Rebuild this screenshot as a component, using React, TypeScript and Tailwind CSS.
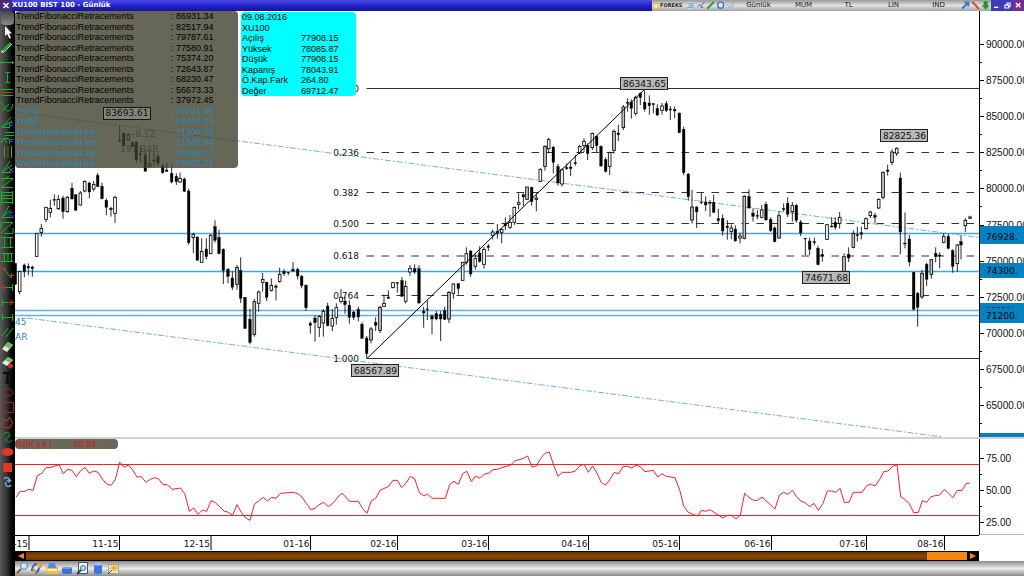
import type { ReactNode } from 'react'
import clsx from 'clsx'

// f = falling (black), h = rising (hollow), g = rising (shaded)
type Bar = [x: number, high: number, low: number, top: number, bottom: number, kind: 'f' | 'h' | 'g']

// bars are kept in thirds of a pixel, relative to the origin of each block
const blocks: { x: number; y: number; bars: Bar[] }[] = [
  {
    x: 0, y: 160,
    bars: [
      [46, 310, 373, 310, 373, 'f'], [59, 334, 403, 334, 395, 'h'], [73, 311, 352, 315, 335, 'f'], [85, 310, 346, 319, 324, 'f'],
      [97, 317, 350, 321, 326, 'f'], [110, 220, 289, 220, 289, 'h'], [124, 192, 230, 205, 218, 'h'], [138, 142, 187, 142, 178, 'h'],
      [151, 119, 172, 145, 157, 'h'], [163, 103, 137, 118, 121, 'f'], [175, 105, 150, 118, 146, 'h'], [189, 107, 176, 114, 155, 'f'],
      [202, 108, 158, 112, 155, 'h'], [216, 69, 118, 85, 117, 'f'], [227, 104, 151, 104, 151, 'f'], [241, 93, 136, 99, 135, 'h'],
      [254, 61, 97, 64, 93, 'h'], [268, 65, 115, 69, 96, 'f'], [281, 63, 94, 73, 87, 'h'], [293, 39, 81, 46, 80, 'f'],
      [306, 68, 118, 79, 116, 'f'], [319, 115, 166, 121, 142, 'f'], [333, 140, 170, 145, 149, 'f'], [345, 107, 189, 112, 160, 'h'],
      [359, -103, -55, -60, -57, 'f'], [371, -81, -43, -81, -43, 'f'], [385, -80, -58, -76, -60, 'h'], [397, -55, -38, -53, -40, 'f'],
      [409, -56, 10, -53, 0, 'f'], [421, -40, 10, -20, -17, 'f'], [436, -25, 34, -15, 34, 'f'], [449, -30, 22, 12, 20, 'h'],
      [462, -25, 20, 0, 3, 'f'], [474, -20, 18, -10, 10, 'f'], [488, 10, 41, 18, 38, 'f'], [500, 7, 36, 30, 34, 'f'],
      [515, 13, 70, 40, 66, 'f'], [529, 40, 75, 49, 65, 'f'], [540, 38, 68, 55, 66, 'h'], [553, 53, 96, 57, 94, 'f'],
      [566, 86, 254, 93, 248, 'f'], [580, 218, 279, 223, 233, 'h'], [592, 229, 302, 231, 301, 'f'], [605, 235, 308, 274, 307, 'h'],
      [619, 235, 298, 267, 290, 'f'], [632, 222, 282, 226, 281, 'h'], [645, 181, 248, 200, 241, 'f'], [657, 209, 283, 232, 281, 'f'],
      [670, 265, 372, 268, 331, 'f'], [684, 324, 370, 328, 349, 'f'], [697, 334, 390, 354, 382, 'f'], [711, 315, 389, 322, 373, 'g'],
      [722, 292, 429, 331, 415, 'f'], [735, 411, 507, 412, 505, 'f'], [750, 446, 553, 478, 547, 'f'], [763, 417, 530, 425, 523, 'g'],
      [776, 392, 455, 396, 430, 'h'], [788, 339, 395, 358, 367, 'h'], [800, 365, 423, 367, 412, 'f'], [814, 355, 395, 376, 391, 'h'],
      [828, 373, 421, 378, 382, 'f'], [839, 323, 368, 343, 364, 'h'], [852, 327, 348, 334, 341, 'f'], [865, 336, 345, 337, 339, 'f'],
      [879, 306, 335, 328, 333, 'f'], [893, 323, 358, 328, 348, 'f'], [905, 345, 385, 349, 377, 'f'], [918, 373, 453, 376, 443, 'f'],
      [931, 484, 521, 490, 496, 'f'], [945, 466, 545, 474, 488, 'f'], [958, 465, 531, 469, 502, 'h'], [970, 447, 530, 454, 489, 'h'],
      [983, 428, 499, 438, 497, 'f'], [997, 447, 513, 475, 498, 'h'], [1009, 430, 494, 443, 472, 'h'],
    ],
  },
  {
    x: 300, y: 200,
    bars: [
      [123, 267, 310, 292, 304, 'h'], [135, 290, 341, 303, 314, 'f'], [148, 301, 371, 316, 352, 'f'], [161, 333, 360, 336, 352, 'f'],
      [175, 320, 364, 328, 351, 'f'], [186, 367, 416, 373, 415, 'f'], [200, 408, 474, 414, 461, 'f'], [213, 381, 430, 387, 420, 'g'],
      [227, 352, 393, 367, 376, 'f'], [240, 318, 399, 322, 391, 'g'], [252, 284, 321, 310, 319, 'h'], [265, 271, 297, 291, 295, 'f'],
      [279, 246, 265, 248, 263, 'h'], [292, 246, 278, 248, 250, 'f'], [306, 231, 290, 242, 289, 'f'], [317, 242, 310, 259, 304, 'h'],
      [330, 195, 227, 205, 216, 'h'], [344, 193, 222, 206, 216, 'f'], [357, 196, 311, 206, 309, 'f'], [371, 320, 383, 334, 339, 'f'],
      [382, 301, 360, 327, 329, 'f'], [396, 343, 403, 348, 357, 'f'], [409, 333, 361, 341, 357, 'f'], [422, 333, 423, 343, 357, 'f'],
      [434, 320, 360, 332, 358, 'f'], [447, 273, 369, 277, 357, 'g'], [460, 250, 297, 252, 280, 'h'], [475, 250, 284, 251, 266, 'f'],
      [488, 187, 241, 187, 241, 'h'], [499, 142, 194, 161, 187, 'h'], [512, 150, 230, 153, 222, 'f'], [526, 162, 209, 176, 199, 'h'],
      [539, 139, 188, 159, 184, 'f'], [552, 141, 206, 148, 193, 'h'], [565, 132, 153, 138, 142, 'f'],
    ],
  },
  {
    x: 380, y: 70,
    bars: [
      [338, 479, 508, 486, 496, 'h'], [352, 462, 506, 484, 490, 'f'], [365, 475, 520, 478, 487, 'h'], [376, 442, 480, 462, 468, 'f'],
      [390, 435, 477, 457, 472, 'h'], [403, 410, 465, 412, 457, 'h'], [416, 370, 418, 398, 403, 'h'], [430, 370, 408, 374, 381, 'f'],
      [441, 351, 388, 351, 388, 'g'], [455, 350, 407, 352, 395, 'f'], [469, 370, 424, 384, 388, 'h'], [481, 295, 336, 298, 334, 'h'],
      [495, 226, 302, 229, 289, 'g'], [506, 203, 250, 209, 236, 'h'], [520, 229, 310, 231, 277, 'f'], [534, 282, 347, 290, 339, 'f'],
      [546, 295, 350, 299, 342, 'h'], [560, 280, 300, 293, 296, 'f'], [572, 275, 318, 291, 296, 'f'], [586, 255, 287, 278, 281, 'f'],
      [599, 224, 252, 229, 249, 'h'], [612, 205, 246, 214, 227, 'h'], [623, 220, 270, 226, 251, 'f'], [637, 188, 240, 190, 233, 'h'],
      [650, 196, 246, 199, 227, 'f'], [663, 226, 290, 229, 288, 'f'], [677, 262, 308, 269, 304, 'f'], [689, 245, 315, 248, 289, 'h'],
      [702, 178, 251, 184, 241, 'g'], [715, 164, 213, 189, 194, 'f'], [730, 105, 180, 111, 173, 'g'], [743, 85, 125, 97, 100, 'f'],
      [754, 88, 146, 96, 115, 'f'], [767, 77, 137, 82, 130, 'h'], [781, 67, 105, 70, 83, 'f'], [794, 61, 125, 97, 117, 'f'],
      [808, 76, 134, 99, 107, 'f'], [820, 99, 130, 101, 104, 'f'], [832, 103, 138, 115, 135, 'f'], [846, 99, 134, 108, 121, 'h'],
      [859, 93, 126, 101, 122, 'f'], [871, 108, 150, 117, 120, 'f'], [884, 110, 145, 118, 123, 'f'], [898, 128, 189, 129, 188, 'f'],
      [911, 170, 315, 178, 308, 'f'], [925, 309, 392, 312, 380, 'f'], [936, 360, 461, 411, 450, 'g'], [950, 408, 474, 411, 426, 'f'],
      [964, 367, 402, 396, 398, 'f'], [977, 379, 423, 396, 405, 'f'],
    ],
  },
  {
    x: 670, y: 130,
    bars: [
      [120, 210, 260, 217, 220, 'f'], [131, 194, 249, 217, 247, 'f'], [145, 236, 282, 266, 272, 'f'], [158, 253, 317, 265, 303, 'f'],
      [172, 270, 329, 288, 293, 'f'], [184, 283, 328, 294, 304, 'h'], [196, 286, 335, 297, 333, 'f'], [210, 308, 340, 318, 324, 'h'],
      [223, 196, 328, 199, 325, 'g'], [237, 178, 236, 200, 234, 'f'], [249, 235, 275, 249, 259, 'f'], [262, 240, 268, 256, 259, 'f'],
      [275, 225, 265, 240, 262, 'h'], [288, 215, 272, 223, 270, 'f'], [302, 262, 306, 268, 302, 'f'], [314, 289, 337, 294, 335, 'f'],
      [327, 244, 326, 257, 324, 'g'], [341, 220, 245, 236, 239, 'f'], [353, 202, 261, 220, 253, 'f'], [367, 216, 275, 227, 245, 'h'],
      [379, 222, 278, 226, 271, 'f'], [392, 270, 318, 276, 309, 'f'], [406, 325, 375, 325, 327, 'f'], [419, 323, 376, 333, 358, 'f'],
      [433, 323, 346, 335, 338, 'f'], [444, 347, 406, 355, 404, 'f'], [457, 357, 395, 373, 378, 'f'], [471, 282, 330, 284, 328, 'h'],
      [485, 262, 292, 288, 291, 'f'], [496, 262, 299, 277, 292, 'f'], [509, 246, 296, 262, 280, 'h'], [522, 370, 440, 380, 425, 'g'],
      [536, 352, 396, 373, 384, 'f'], [550, 301, 355, 310, 352, 'g'], [562, 290, 335, 314, 317, 'f'], [574, 290, 328, 308, 313, 'f'],
      [588, 262, 299, 266, 296, 'h'], [601, 243, 264, 246, 257, 'h'], [615, 249, 279, 256, 262, 'f'], [626, 205, 237, 208, 234, 'h'],
      [639, 124, 208, 127, 202, 'g'], [653, 104, 137, 120, 124, 'f'], [666, 58, 106, 66, 97, 'g'], [680, 52, 78, 55, 70, 'h'],
      [691, 128, 373, 144, 306, 'f'], [705, 247, 355, 339, 342, 'f'], [718, 315, 409, 327, 396, 'f'], [731, 426, 541, 427, 538, 'f'],
      [743, 486, 590, 490, 532, 'f'], [756, 420, 506, 430, 501, 'g'], [770, 399, 468, 403, 448, 'f'], [784, 387, 446, 389, 433, 'g'],
      [797, 352, 397, 370, 380, 'f'], [809, 367, 414, 375, 378, 'f'], [821, 309, 340, 319, 337, 'h'], [835, 312, 358, 319, 355, 'f'],
      [848, 358, 428, 362, 409, 'f'], [862, 342, 425, 345, 401, 'h'], [873, 317, 388, 335, 345, 'f'], [886, 264, 306, 271, 287, 'h'],
      [900, 257, 266, 261, 265, 'h'],
    ],
  },
]

const rsi = [
  { x: 0, y: 430, points: '48,202 60,184 75,184 85,178 99,181 112,137 125,130 138,113 153,112 177,104 190,131 203,118 216,121 229,140 242,122 255,112 268,130 281,123 294,127 307,147 320,162 333,166 346,149 359,96 373,112 385,105 398,120 411,141 424,140 438,157 451,148 464,143 476,147 489,164 502,164 516,178 542,174 555,193 568,244 581,234 594,253 607,240 620,244 633,212 646,218 672,243 685,247 698,255 711,224 724,247 737,264 750,271 763,223 789,202 802,213 815,202 828,205 841,190 880,187 893,191 906,201 919,220 932,239 945,235 958,224 971,217 985,230 1000,218 1020,194' },
  { x: 340, y: 440, points: '0,164 5,160 14,167 28,184 55,184 68,206 81,220 94,182 107,175 120,151 146,139 159,121 172,121 185,143 198,130 211,109 224,116 238,158 250,167 263,163 277,175 316,175 329,134 342,124 355,133 368,101 381,94 394,125 407,108 420,115 433,102 446,100 459,89 472,88 485,83 511,76 524,63 550,55 563,48 576,81 589,78 602,55 615,40 628,36 641,76 654,109 667,97 693,97 706,93 719,78 732,73 745,97 758,78 771,99 784,128 797,135 810,118 823,97 836,101 849,80 862,79 875,84 888,76 901,80 914,95 940,91 953,111 966,101 979,109 1005,113 1020,153' },
  { x: 640, y: 440, points: '120,153 131,198 144,216 158,223 173,228 184,211 197,214 210,209 236,226 249,234 262,226 275,226 288,237 301,226 314,160 327,172 340,181 353,181 366,171 405,207 418,165 431,157 444,163 457,151 470,171 483,183 496,189 509,200 522,190 535,211 549,190 562,153 575,153 588,157 600,145 613,187 627,187 640,157 666,157 679,138 692,132 705,138 720,117' },
  { x: 840, y: 280, points: '120,597 131,575 144,573 157,560 171,554 182,650 195,659 208,671 221,698 235,697 247,662 260,667 273,650 286,647 299,645 313,628 326,640 339,653 352,631 366,632 378,611 390,609' },
]

const fibLevels = [
  ['0.000', 88.5],
  ['0.236', 152.5],
  ['0.382', 192.5],
  ['0.500', 223.5],
  ['0.618', 256],
  ['0.764', 295.5],
  ['1.000', 358.5],
] as const

const priceLabels = ['90000.00', '87500.00', '85000.00', '82500.00', '80000.00', '77500.00', '75000.00', '72500.00', '70000.00', '67500.00', '65000.00']

const tags = [
  ['86343.65', 620.5, 77.5],
  ['68567.89', 351.5, 364.5],
  ['74671.68', 802.5, 271.5],
  ['82825.36', 880.5, 129.5],
] as const

const months = [
  ['10-15', 29],
  ['11-15', 119.5],
  ['12-15', 211],
  ['01-16', 310.5],
  ['02-16', 397.5],
  ['03-16', 488.5],
  ['04-16', 588.5],
  ['05-16', 679.5],
  ['06-16', 771.5],
  ['07-16', 866.5],
  ['08-16', 944.5],
] as const

const retracements = ['86931.34', '82517.94', '79787.61', '77580.91', '75374.20', '72643.87', '68230.47', '56673.33', '37972.45']

const trends = [
  ['Trend', '77741.39'],
  ['Trend', '62344.23'],
  ['TrendHorizontalLine', '71200.00'],
  ['TrendHorizontalLine', '71546.94'],
  ['TrendHorizontalLine', '76928.27'],
  ['TrendHorizontalLine', '74300.31'],
]

const quote = [
  ['Açılış', '77908.15'],
  ['Yüksek', '78085.87'],
  ['Düşük', '77908.15'],
  ['Kapanış', '78043.91'],
  ['Ö.Kap.Fark', '264.80'],
  ['Değer', '69712.47'],
]

const G = '#12b81e'
const R = '#d42a2a'
const B = '#2a62c8'

// drawing tools, top to bottom
const tools: [string, ReactNode][] = [
  ['Select', <path d="M5 1v10l2.300-2 2 4.500 1.700-.8-2-4.300h3z" fill="#fff" />],
  ['Pencil', <g><path d="M2 12 11 3" stroke="#25a52a" strokeWidth="3" /><path d="M3.500 12.500 12 4" stroke="#9be09b" /><path d="m1 13 1-3 2 2z" fill="#f4d9a0" /></g>],
  ['Horizontal line', <path d="M0 7.500h14M1.500 6v3M12.500 6v3" stroke={G} />],
  ['Vertical line', <path d="M7.500 2v11M5 2.500h5M5 12.500h5" stroke={G} />],
  ['Channel lines', <g><path d="M1 4.500h12M1 10.500h12" stroke={G} /><path d="M1 7.500h12" stroke={R} /></g>],
  ['Cycle', <path d="M1 3c3 0 3 8 7 8 3 0 4-3 5-7M2 11 9 4" stroke={G} />],
  ['Fan', <g><path d="M11 2 2 12.500h8M2 12 12 6" stroke={G} /><path d="M9.500 13V8h4M9.500 10.500h3" stroke={B} /></g>],
  ['Retracement', <g><path d="M5 2.500h9M5 5.500h9M4 8.500h5M1 13l3-5 3 5" stroke={G} /><path d="M9.500 14V9.500h4M9.500 11.500h3" stroke={B} /></g>],
  ['Time zones', <g><path d="M4.500 1v12M11.500 1v12" stroke={G} /><path d="M8 1v12" stroke={R} /></g>],
  ['Arc fan', <g><path d="M10 1 2 12.500h9M2 12 12 5" stroke={G} /><path d="m9 8 4 4M13 8l-4 4" stroke={B} /></g>],
  ['Channel', <path d="M1 3.500h12M1 12.500h12M1 12 13 4M2 6 9 1" stroke={G} />],
  ['Grid', <path d="M1.500 1v13M12.500 1v13M1 2.500h12M1 5.500h12M1 8.500h12M1 12.500h12" stroke={G} />],
  ['Gann fan', <g><path d="M9 1 2 12.500h8M2 12 11 5" stroke={G} /><path d="M13 7.500h-3v5h3v-2.500" stroke={B} /></g>],
  ['Pitchfork', <path d="M1 2.500h12M1 13 12 3M1 8V3M4 13.500h9V8" stroke={G} />],
  ['Speed lines', <path d="M1 2.500h12M1 12.500h12M4.500 2v11M10.500 2v11" stroke={G} />],
  ['Parallel bars', <path d="M1 3.500h12M1 11.500h12M4.500 3v8M8 3v8M11.500 3v8" stroke={G} />],
  ['Segment', <g><path d="m4 4 7 9" stroke={G} /><path d="M1 3.500h5M3.500 1v5M9 10.500h5M11.500 8v5" stroke={R} /></g>],
  ['Ray left', <g><path d="M5 7.500h8M12.500 4v7" stroke={G} /><path d="M0 7.500h6M3 5l3 2.500L3 10" stroke={R} /></g>],
  ['Ray right', <g><path d="M2 7.500h8M2.500 4v7" stroke={G} /><path d="M8 7.500h6M10 5l3 2.500L10 10" stroke={R} /></g>],
  ['Range', <path d="M2 7.500h10M2.500 4v7M12.500 4v7" stroke={G} />],
  ['Parallel', <path d="m2 11 6-8M6 12l7-9" stroke={G} />],
  ['Eraser', <g><path d="m2 9 6-7 5 3-6 7z" fill="#dff0d0" /><path d="m5 6 3-4 5 3-3 4z" fill="#6fb85c" /></g>],
  ['Erase all', <g><path d="m2 8 6-6 5 3-6 6z" fill="#dff0d0" /><path d="m5 5 3-3 5 3-3 3z" fill="#6fb85c" /><circle cx="10.500" cy="11" r="2.500" fill={R} /></g>],
  ['Text', <path d="M3 3h9M7.500 3v10M5.500 12.500h4" stroke="#0a0a0a" strokeWidth="2" />],
  ['Ellipse', <ellipse cx="7.500" cy="7.500" rx="5.500" ry="3.500" stroke="#a82424" />],
  ['Rectangle', <path d="M2.500 2.500h11v10h-11z" stroke="#a82424" />],
  ['Polygon', <path d="m2.500 12 1-8 4 2 2-4 3 6-3 5z" stroke={R} />],
  ['Curve', <path d="M3 5c2-4 8-3 6 1S4 9 6 11s5 1 6-1" stroke={G} />],
  ['Filled ellipse', <ellipse cx="7.500" cy="7" rx="6" ry="4" fill="#e03528" />],
  ['Filled rectangle', <path d="M3 3h9v9H3z" fill="#e03528" />],
  ['Refresh', <path d="M4 4c2-3 7-1 5 3M7 5l2 2 2-2M11 10c-2 3-7 1-5-3" stroke="#7ea6d8" strokeWidth="1.500" />],
]

const footerTools: [string, ReactNode][] = [
  ['Zoom', <g><circle cx="9" cy="5" r="3.500" fill="#cfe6fa" stroke="#5b7fa8" /><path d="m6 8-4 4" stroke="#8a5a2a" strokeWidth="2" /></g>],
  ['Reload', <g><path d="M2 10c0-4 2-7 5-7M5 12c4 0 3-6 6-7" stroke="#2b62c4" strokeWidth="2" /><path d="M8 2l4 1-3 4M3 7l3 5" stroke="#e89a20" strokeWidth="2" /></g>],
  ['Open', <g><path d="M1 5h12v8H1z" fill="#f2bb4c" /><path d="M4 2h6l1 5H3z" fill="#4b8be0" /><path d="M2 8h10v2H2z" fill="#fff0c0" /></g>],
  ['Print', <g><rect x="2" y="6" width="10" height="7" rx="2" fill="#3d6fd0" /><path d="M3 7h8" stroke="#a9c4f4" /></g>],
  ['Preview', <g><path d="M3.500 1.500h9v11h-9z" fill="#eef6ff" stroke="#39536e" /><circle cx="8" cy="7" r="2.500" fill="#bcdcf6" stroke="#3f74a8" /><path d="m6 9-4 4" stroke="#29425c" strokeWidth="2" /></g>],
  ['Database', <g><path d="M4 3v9c0 1.500 8 1.500 8 0V3z" fill="#3f74d8" /><ellipse cx="8" cy="3" rx="4" ry="1.500" fill="#a5c4f6" /></g>],
  ['Wizard', <g><path d="M3.500 3.500h10v9h-10z" fill="#f0e9d0" stroke="#a8a08a" /><path d="M9 3v8M5 7h8M6 4l6 6M12 4l-6 6" stroke="#e0a41c" /><path d="m3 13 4-4" stroke="#4a4a4a" /></g>],
]

const quickTools: [string, ReactNode][] = [
  ['List', <g><path d="M2 2h9v10H2z" fill="#e8f1fb" /><path d="M2 4h9M4 7h8M2 10h9" stroke="#4f83c4" strokeWidth="1.500" /></g>],
  ['Chart', <g><path d="M1 4h11v8H1z" fill="#c7daf0" /><path d="m2 10 4-4 2 2 5-6" stroke="#3a6fbc" strokeWidth="1.500" /><path d="M6 10h5" stroke="#c03030" strokeWidth="1.500" /></g>],
  ['Draw', <path d="M2 12 12 2" stroke="#2c9a34" strokeWidth="3" />],
  ['Globe', <circle cx="7" cy="7" r="4.500" fill="#dcebfa" stroke="#3674c8" strokeWidth="2" />],
  ['Check', <path d="m2 6 3 5 7-9M8 11l4-5" stroke="#9ab2cc" strokeWidth="1.500" />],
]

const statusTools: [string, ReactNode][] = [
  ['Link', <path d="M2 12 10 4M5 3h6v6" stroke="#3c74d8" strokeWidth="3" />],
  ['Cut', <g><path d="m2 2 10 11" stroke="#d84530" strokeWidth="3" /><path d="M7 3h5" stroke="#f2c8b8" strokeWidth="2" /></g>],
  ['Download', <path d="M4 1h6v6h3l-6 7-6-7h3z" fill="#1d9a22" />],
]

const windowTools: [string, ReactNode][] = [
  ['Minimize', <path d="M4 10h6" stroke="#fff" strokeWidth="2" />],
  ['Restore', <path d="M4 7h5v4H4zM7 6V4h4v5h-1" stroke="#fff" strokeWidth="1.500" />],
  ['Close', <path d="m4 4 6 6M10 4l-6 6" stroke="#fff" strokeWidth="2" />],
]

function IconButton({ label, className, children }: { label: string; className: string; children: ReactNode }) {
  return (
    <button aria-label={label} className={clsx('flex shrink-0 items-center justify-center', className)}>
      <svg viewBox="0 0 15 15" fill="none" className="h-full w-full">{children}</svg>
    </button>
  )
}

function TitleBar() {
  return (
    <header className="flex h-[11px] shrink-0 items-stretch bg-linear-to-b from-[#4a4ae6] via-[#2424c8] to-[#14149a]">
      <IconButton label="Close chart" className="w-3 bg-[#4a2a78]">
        <path d="m4 4 7 7M11 4l-7 7" stroke="#fff" strokeWidth="2" />
      </IconButton>
      <h1 className="flex flex-1 items-center font-['DejaVu_Sans','Verdana',sans-serif] text-[7px] leading-none font-bold whitespace-nowrap text-white">
        XU100 BIST 100 - Günlük
      </h1>
      <div className="flex items-stretch bg-linear-to-b from-[#9a9a9a] via-[#e2e2e2] to-[#a2a2a2] font-['DejaVu_Sans','Verdana',sans-serif] text-[7px] leading-none text-[#222]">
        <div className="flex w-[34px] items-center gap-px pl-px text-[5px] font-bold">
          <span className="size-[6px] rounded-full border border-[#e8c020] bg-[#fff3a0]" />
          FOREKS
        </div>
        {quickTools.map(([label, icon]) => (
          <IconButton key={label} label={label} className="w-[10px]">{icon}</IconButton>
        ))}
        <nav className="flex">
          {['Günlük', 'MUM', 'TL', 'LIN', 'IND'].map((item) => (
            <button key={item} className="w-[45px] text-center">{item}</button>
          ))}
        </nav>
        {statusTools.map(([label, icon]) => (
          <IconButton key={label} label={label} className="w-[10px]">{icon}</IconButton>
        ))}
        {windowTools.map(([label, icon]) => (
          <IconButton key={label} label={label} className={clsx('w-[11px]', label === 'Close' ? 'bg-[#74308c]' : 'bg-[#3c3cb4]')}>{icon}</IconButton>
        ))}
      </div>
    </header>
  )
}

function ToolBar() {
  return (
    <aside className="flex w-[15px] shrink-0 flex-col bg-linear-to-r from-[#5a5a5a] via-[#2e2e2e] to-black">
      <div className="mx-px h-[14px] shrink-0 rounded-sm bg-linear-to-b from-[#444] to-[#8a8a8a]" />
      {tools.map(([label, icon]) => (
        <IconButton key={label} label={label} className="h-[15px] w-full">{icon}</IconButton>
      ))}
    </aside>
  )
}

function Candle({ bar: [x, high, low, top, bottom, kind] }: { bar: Bar }) {
  return (
    <g stroke="#000" strokeWidth="2.500">
      <path d={`M${x} ${high}V${low}`} />
      {kind === 'f' ? (
        <rect x={x - 4} y={top} width="8" height={bottom - top} fill="#000" strokeWidth="1" />
      ) : (
        <rect x={x - 4} y={top} width="8" height={bottom - top} fill={kind === 'g' ? '#c4c4c4' : '#fff'} />
      )}
    </g>
  )
}

function AxisBox({ y, height, text }: { y: number; height: number; text?: string }) {
  return (
    <g>
      <rect x="980" y={y} width="44" height={height} fill="#0580c0" />
      {text && <text x="986" y={y + height - 4} className="font-['DejaVu_Sans',sans-serif] text-[9px]">{text}</text>}
    </g>
  )
}

function PriceChart() {
  return (
    <svg viewBox="15 11 1009 426" className="h-full w-full font-['DejaVu_Sans','Verdana',sans-serif] text-[9px]">
      {fibLevels.map(([label, y]) => (
        <g key={label}>
          <path
            d={`M366.500 ${y}H${y < 100 || y > 350 ? 979 : 975}`}
            stroke="#333"
            strokeDasharray={y < 100 || y > 350 ? undefined : '7.500 7.500'}
          />
          <text x="359" y={y + 3} textAnchor="end" fill="#111">{label}</text>
        </g>
      ))}

      <g stroke="#5fb2dc" strokeWidth="1.500">
        <path d="M15 233.500H979M15 271.500H979" stroke="#42a8dc" />
        <path d="M15 310.500H979M15 315.500H979" />
        <path d="M16 112 979 237.500M27 318 943 437" stroke="#4a9fca" strokeWidth="0.800" strokeDasharray="6 2 2 2" />
      </g>
      <g fill="#2f86b4">
        <text x="132" y="137">-8.12</text>
        <text x="120" y="152">191 BAR</text>
        <text x="15" y="325">45</text>
        <text x="15" y="340">AR</text>
      </g>

      {blocks.map((block) => (
        <g key={block.x} transform={`translate(${block.x} ${block.y}) scale(${1 / 3})`}>
          {block.bars.map((bar) => (
            <Candle key={bar[0]} bar={bar} />
          ))}
        </g>
      ))}
      <path d="M367 358.500 645 89" stroke="#000" />

      {tags.map(([label, x, y]) => (
        <g key={label}>
          <rect x={x} y={y} width="47" height="12" fill="#b8b8b8" stroke="#222" />
          <text x={x + 24} y={y + 9} textAnchor="middle" fill="#111">{label}</text>
        </g>
      ))}

      {/* price axis */}
      <path d="M979.500 11V437" stroke="#000" />
      <g className="font-['Liberation_Sans','Arial',sans-serif] text-[10px]" fill="#111">
        {priceLabels.map((label, i) => (
          <g key={label}>
            <path d={`M980 ${Math.round(45 + i * 36.1) - 0.5}h4M980 ${Math.round(63 + i * 36.1) - 0.5}h2`} stroke="#000" />
            <text x="986" y={Math.round(45 + i * 36.1) + 3}>{label}</text>
          </g>
        ))}
      </g>
      <AxisBox y={226} height={18} text="76928." />
      <AxisBox y={263} height={15} text="74300." />
      <AxisBox y={303} height={20} text="71200." />
      <path d="M987 307.500h26" stroke="#053a5c" strokeDasharray="3 2" />
      <AxisBox y={433} height={4} />
    </svg>
  )
}

function RsiChart() {
  return (
    <svg viewBox="15 439 1009 96" className="h-full w-full font-['Liberation_Sans','Arial',sans-serif] text-[10px]">
      <g stroke="#f0202c" fill="none">
        <path d="M15 464.500H979M15 515.500H979" />
        {rsi.map((part) => (
          <g key={part.x} transform={`translate(${part.x} ${part.y}) scale(${1 / 3})`}>
            <polyline points={part.points} strokeWidth="3" />
          </g>
        ))}
      </g>
      <path d="M979.500 439V535M980 458.500h4M980 474.500h2M980 490.500h4M980 506.500h2M980 522.500h4" stroke="#000" />
      <path d="M980 534.500h44" stroke="#bbb" />
      <g fill="#111">
        <text x="986" y="462">75.00</text>
        <text x="986" y="494">50.00</text>
        <text x="986" y="526">25.00</text>
      </g>
    </svg>
  )
}

function DateAxis() {
  return (
    <svg viewBox="15 535 1009 16" className="h-4 w-full shrink-0 font-['DejaVu_Sans','Verdana',sans-serif] text-[9px]">
      <path d="M15 535.500H979" stroke="#000" />
      {months.map(([label, x]) => (
        <g key={label}>
          <path d={`M${x} 536v14`} stroke="#000" />
          <text x={x - 1} y="547" textAnchor="end" fill="#111">{label}</text>
        </g>
      ))}
    </svg>
  )
}

function IndicatorPanel() {
  return (
    <div className="absolute top-0 left-0 h-[157px] w-[223px] rounded-sm bg-[#3e3e2a]/79">
      <dl className="flex h-full flex-col justify-between font-['Liberation_Sans','Arial',sans-serif] text-[9px] leading-[10px] text-black">
        {retracements.map((value) => (
          <div key={value} className="flex pl-px">
            <dt className="w-[155px]">TrendFibonacciRetracements</dt>
            <dd>: {value}</dd>
          </div>
        ))}
        {trends.map(([name, value]) => (
          <div key={value} className="flex pl-px text-[#2a88b8]">
            <dt className="w-[155px]">{name}</dt>
            <dd>: {value}</dd>
          </div>
        ))}
      </dl>
      {/* swing high tag stays readable on top of the panel */}
      <span className="absolute top-24 left-[88px] flex h-[13px] w-12 items-center justify-center border border-[#161610] bg-[#84847c] font-['DejaVu_Sans','Verdana',sans-serif] text-[9px] leading-none text-[#111]">
        83693.61
      </span>
    </div>
  )
}

function QuotePanel() {
  return (
    <div className="absolute top-px left-[226px] flex h-[84px] w-[115px] flex-col justify-between rounded-sm bg-[#00ffff] pl-px font-['Liberation_Sans','Arial',sans-serif] text-[9px] leading-[10px] text-black">
      <p>09.08.2016</p>
      <p>XU100</p>
      {quote.map(([name, value]) => (
        <p key={name} className="flex">
          <span className="w-[59px]">{name}</span>
          <span>{value}</span>
        </p>
      ))}
    </div>
  )
}

function ScrollBar() {
  return (
    <div className="mr-[45px] flex h-[10px] shrink-0 items-stretch bg-black py-px">
      <button aria-label="Scroll left" className="flex w-[11px] items-center justify-center">
        <svg viewBox="0 0 6 6" className="size-[6px]"><path d="M6 0v6L0 3z" fill="#f08a10" /></svg>
      </button>
      <div className="flex flex-1 bg-linear-to-b from-[#5e3000] via-[#8a4a04] to-[#6a3800]">
        <div className="ml-auto w-10 bg-[#f5860c]" />
      </div>
      <button aria-label="Scroll right" className="flex w-3 items-center justify-center">
        <svg viewBox="0 0 6 6" className="size-[6px]"><path d="M0 0v6l6-3z" fill="#f08a10" /></svg>
      </button>
    </div>
  )
}

export default function App() {
  return (
    <div className="flex h-screen flex-col overflow-hidden bg-white">
      <TitleBar />
      <div className="flex min-h-0 flex-1">
        <ToolBar />
        <main className="flex min-w-0 flex-1 flex-col">
          <section className="relative min-h-0 flex-[426]">
            <PriceChart />
            <IndicatorPanel />
            <QuotePanel />
          </section>
          <div className="h-[2px] shrink-0 bg-[#d2d2d2]" />
          <section className="relative min-h-0 flex-[96]">
            <RsiChart />
            <p className="absolute top-0 left-0 flex h-[10px] w-[103px] rounded-sm bg-[#69695a] pl-px font-['Liberation_Sans','Arial',sans-serif] text-[9px] leading-[10px] text-[#dc1420]">
              <span className="w-[58px]">RSI( 14 )</span>
              <span>55.54</span>
            </p>
          </section>
          <DateAxis />
          <ScrollBar />
          <footer className="flex h-[15px] shrink-0 bg-linear-to-b from-[#8c8c8c] via-[#ececec] to-[#8c8c8c]">
            {footerTools.map(([label, icon]) => (
              <IconButton key={label} label={label} className="w-[15px]">{icon}</IconButton>
            ))}
          </footer>
        </main>
      </div>
    </div>
  )
}
